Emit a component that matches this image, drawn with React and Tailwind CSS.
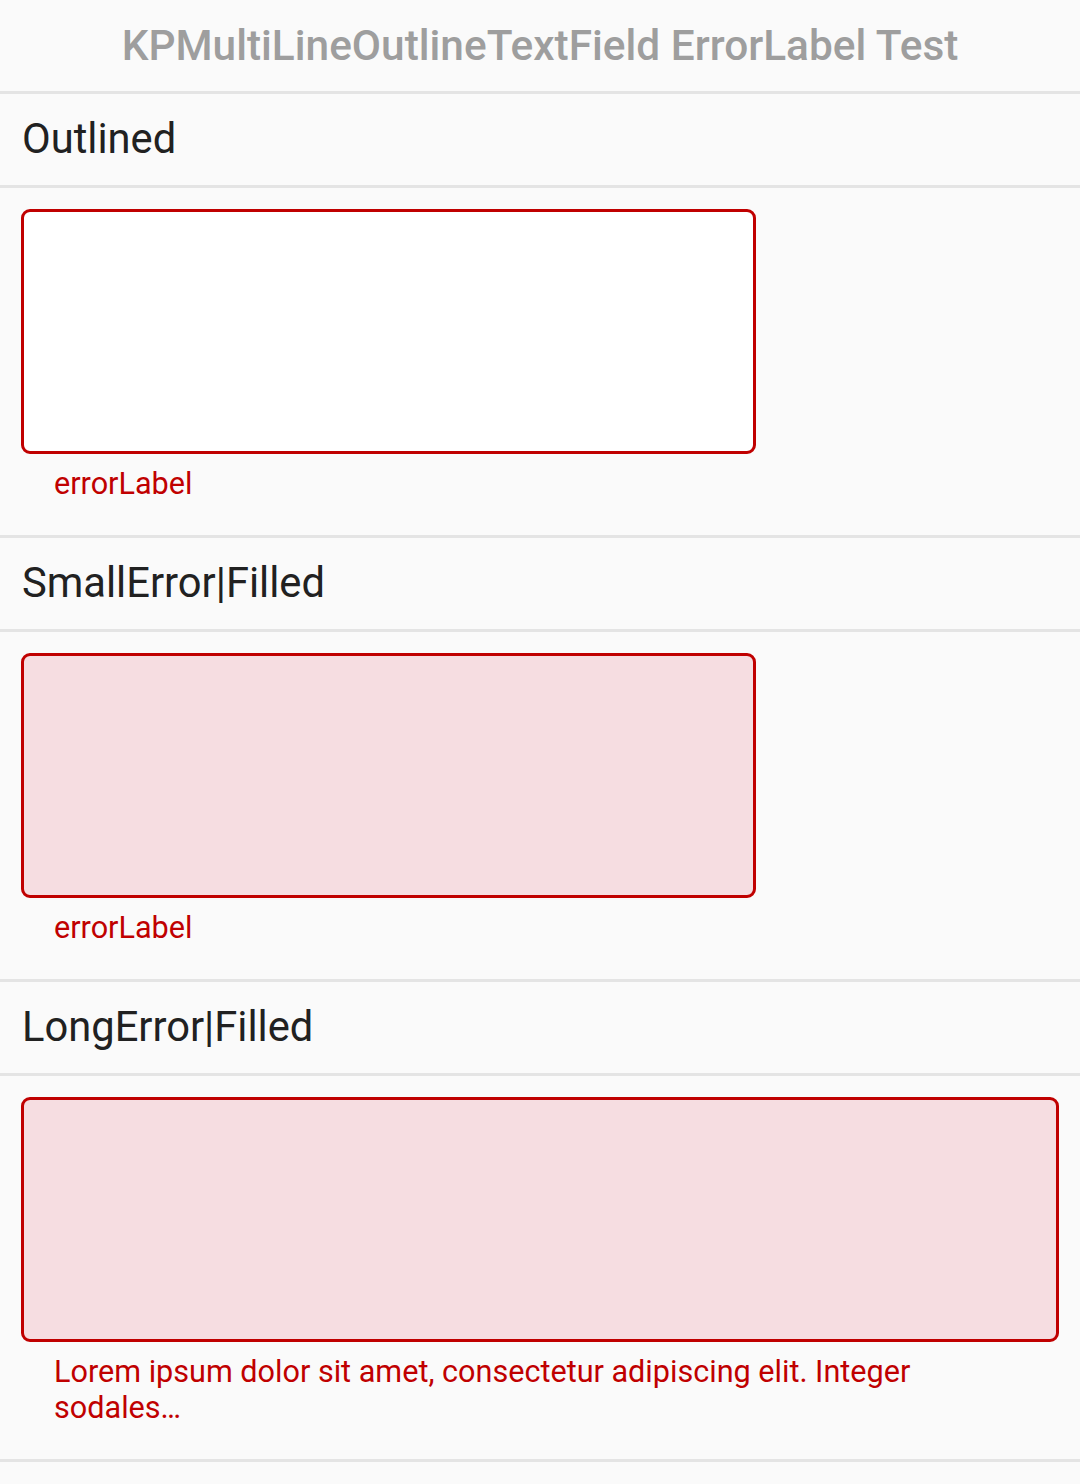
// KPMultiLineOutlineTextField ErrorLabel test screen

const sections = [
  { title: "Outlined", filled: false, wide: false, error: "errorLabel" },
  { title: "SmallError|Filled", filled: true, wide: false, error: "errorLabel" },
  {
    title: "LongError|Filled",
    filled: true,
    wide: true,
    error: ["Lorem ipsum dolor sit amet, consectetur adipiscing elit. Integer", "sodales…"],
  },
];

export default function App() {
  return (
    <div className="min-h-[1484px] bg-[#fafafa] font-['Roboto','Noto_Sans',sans-serif]">
      {/* Toolbar */}
      <header className="flex h-[94px] items-center justify-center border-b-[3px] border-[#e4e4e4]">
        <h1 className="text-[42.4px] font-medium text-[#9e9e9e]">KPMultiLineOutlineTextField ErrorLabel Test</h1>
      </header>

      {sections.map((s) => (
        <section key={s.title}>
          <div className="flex h-[94px] items-center border-b-[3px] border-[#e4e4e4] px-[22px]">
            <h2 className="text-[41.7px] text-[#212121]">{s.title}</h2>
          </div>
          <div className="border-b-[3px] border-[#e4e4e4] px-[21px] pt-[21px] pb-[33px]">
            <TextField filled={s.filled} wide={s.wide} />
            <ErrorLabel text={s.error} />
          </div>
        </section>
      ))}
    </div>
  );
}

function TextField({ filled, wide }) {
  return (
    <div
      className={`h-[245px] rounded-[9px] border-[3px] border-[#c00000] ${filled ? "bg-[#f6dde1]" : "bg-white"} ${
        wide ? "w-[1038px]" : "w-[735px]"
      }`}
    />
  );
}

function ErrorLabel({ text }) {
  const lines = Array.isArray(text) ? text : [text];
  return (
    <p className="mt-[12px] pl-[33px] text-[30.6px] leading-[36px] text-[#c00000]">
      {lines.map((l, i) => (
        <span key={i} className="block">
          {l}
        </span>
      ))}
    </p>
  );
}
